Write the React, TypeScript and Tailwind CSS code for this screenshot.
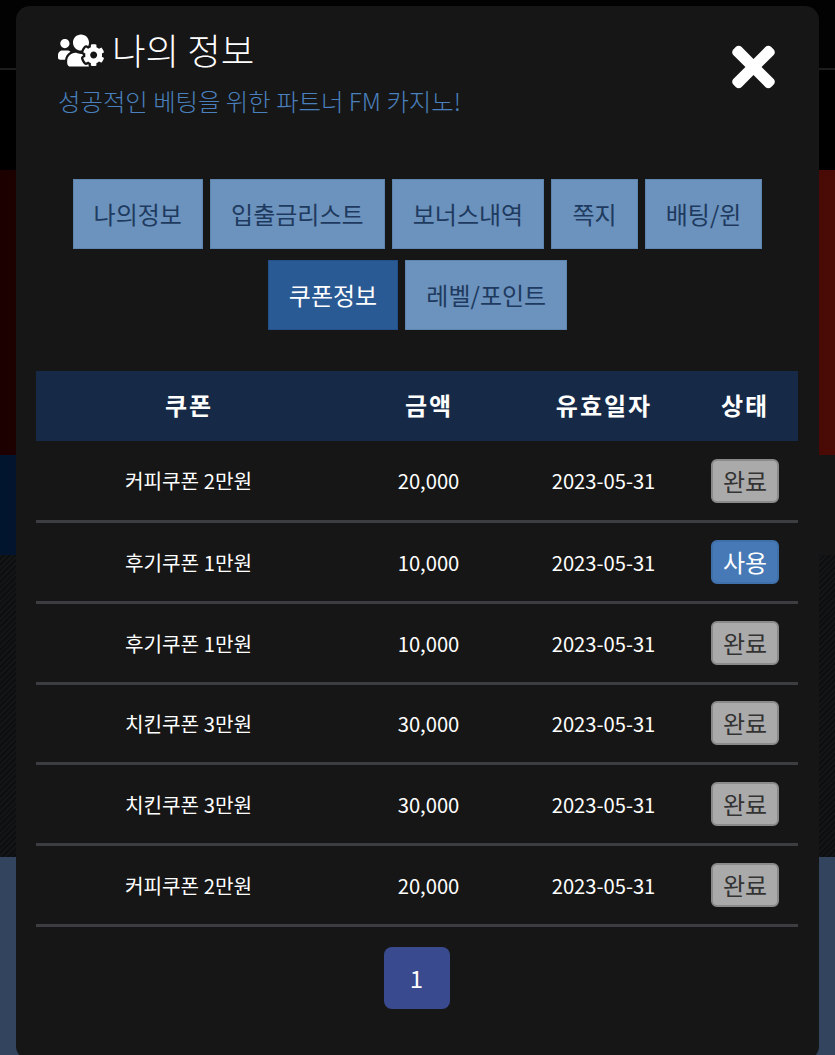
import React from 'react';
import { FaTimes, FaUsersCog } from 'react-icons/fa';

const tabRows = [
    ['나의정보', '입출금리스트', '보너스내역', '쪽지', '배팅/윈'],
    ['쿠폰정보', '레벨/포인트'],
];

const coupons = [
    { name: '커피쿠폰 2만원', amount: '20,000', date: '2023-05-31', used: true },
    { name: '후기쿠폰 1만원', amount: '10,000', date: '2023-05-31', used: false },
    { name: '후기쿠폰 1만원', amount: '10,000', date: '2023-05-31', used: true },
    { name: '치킨쿠폰 3만원', amount: '30,000', date: '2023-05-31', used: true },
    { name: '치킨쿠폰 3만원', amount: '30,000', date: '2023-05-31', used: true },
    { name: '커피쿠폰 2만원', amount: '20,000', date: '2023-05-31', used: true },
];

export default function App() {
    return (
        <div className="relative h-[1055px] w-[835px] overflow-hidden bg-black font-['Noto_Sans_CJK_KR','Noto_Sans',sans-serif]">
            {/* Page behind the modal */}
            <div className="h-[70px] border-b-2 border-[#1d1d1d] bg-[#020202]" />
            <div className="h-[100px] bg-[#000000]" />
            <div className="h-[285px] bg-gradient-to-r from-[#1c0000] to-[#4a0a06]" />
            <div className="h-[100px] bg-gradient-to-r from-[#02152e] to-[#151515]" />
            <div className="h-[302px] bg-[repeating-linear-gradient(135deg,#141517_0px,#141517_2px,#0d0e10_2px,#0d0e10_4px)]" />
            <div className="h-[198px] bg-[#33445f]" />

            {/* Modal */}
            <div className="absolute left-4 top-[6px] h-[1054px] w-[803px] rounded-[14px] bg-[#161616]">
                <div className="flex items-start justify-between pl-[42px] pr-[44px] pt-[17px]">
                    <div>
                        <h2 className="flex h-[54px] items-center gap-[8px] text-[36.5px] font-light text-white">
                            <FaUsersCog className="h-[37px] w-[46px]" />
                            나의 정보
                        </h2>
                        <p className="mt-[2px] text-[24.4px] leading-[44px] font-light text-[#4a80bd]">
                            성공적인 베팅을 위한 파트너 FM 카지노!
                        </p>
                    </div>
                    <button className="mt-[13px] text-white" aria-label="닫기">
                        <FaTimes className="h-[62px] w-[43px]" />
                    </button>
                </div>

                <div className="mt-[56px] flex flex-col gap-[11px]">
                    {tabRows.map((row, i) => (
                        <div key={i} className="flex justify-center gap-[7.2px]">
                            {row.map((tab) => (
                                <div
                                    key={tab}
                                    className={
                                        tab === '쿠폰정보'
                                            ? 'flex h-[70px] items-center border border-[#23508a] bg-[#2a5a94] px-[20px] text-[24px] text-white'
                                            : 'flex h-[70px] items-center border border-[#5d85ae] bg-[#6b93bd] px-[20px] text-[24px] text-[#1f3a5f]'
                                    }
                                >
                                    {tab}
                                </div>
                            ))}
                        </div>
                    ))}
                </div>

                <div className="mt-[41px] px-[20px]">
                    <table className="w-[762px] table-fixed border-collapse text-center text-white">
                        <colgroup>
                            <col className="w-[304px]" />
                            <col className="w-[176px]" />
                            <col className="w-[174px]" />
                            <col className="w-[108px]" />
                        </colgroup>
                        <thead>
                            <tr className="h-[70px] bg-[#162a47] text-[24px] tracking-[2px]">
                                <th className="pl-[2px] pb-[2px] font-semibold">쿠폰</th>
                                <th className="pl-[2px] pb-[2px] font-semibold">금액</th>
                                <th className="pl-[2px] pb-[2px] font-semibold">유효일자</th>
                                <th className="pl-[2px] pb-[2px] font-semibold">상태</th>
                            </tr>
                        </thead>
                        <tbody className="text-[20.2px]">
                            {coupons.map((c, i) => (
                                <tr key={i} className="h-[80.7px] border-b-[3px] border-[#3c3d40]">
                                    <td className="pt-[2px] pl-[1px]">{c.name}</td>
                                    <td className="pt-[2px] pl-[1px]">{c.amount}</td>
                                    <td className="pt-[2px] pl-[1px]">{c.date}</td>
                                    <td className="pl-[2px]">
                                        <span
                                            className={
                                                c.used
                                                    ? 'mx-auto flex h-[44px] w-[68px] items-center justify-center rounded-[6px] border-2 border-[#8a8a8a] bg-[#aaaaaa] text-[24px] text-[#333333]'
                                                    : 'mx-auto flex h-[44px] w-[68px] items-center justify-center rounded-[6px] border-2 border-[#3f70aa] bg-[#4679b5] text-[24px] text-white'
                                            }
                                        >
                                            {c.used ? '완료' : '사용'}
                                        </span>
                                    </td>
                                </tr>
                            ))}
                        </tbody>
                    </table>

                    <div className="mt-[20px] flex justify-center pr-[2px]">
                        <div className="flex h-[62px] w-[66px] items-center justify-center rounded-[8px] bg-[#3a4a8f] text-[24px] text-white">
                            1
                        </div>
                    </div>
                </div>
            </div>
        </div>
    );
}
